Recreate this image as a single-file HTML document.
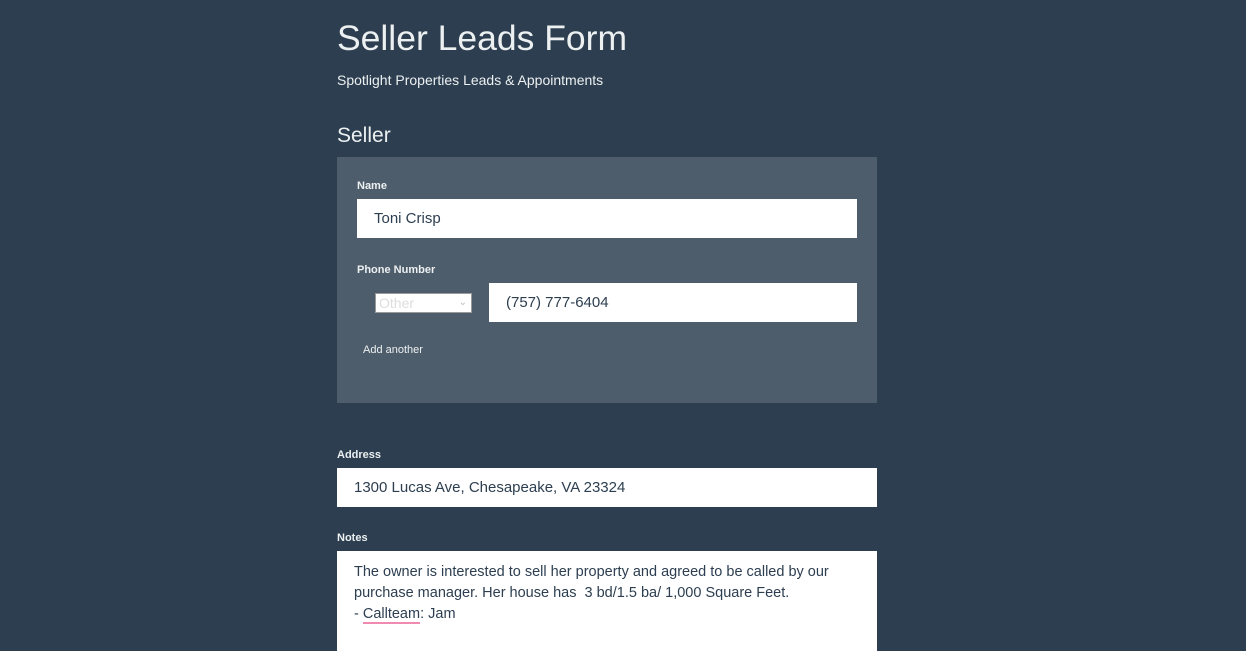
<!DOCTYPE html>
<html><head><style>
body{margin:0;background:#2c3e50;font-family:"Liberation Sans",sans-serif;width:1246px;height:641px;overflow:hidden;position:relative;color:#fff}
.a{position:absolute}
h1{position:absolute;left:337px;top:18px;margin:0;font-weight:normal;font-size:35.5px;color:#ecf0f1}
.lbl{position:absolute;font-size:11px;font-weight:bold;color:#ecf0f1}
.inp{position:absolute;background:#fff;color:#2c3e50;font-size:15px;box-sizing:border-box;padding-left:17px}
</style></head><body>
<h1>Seller Leads Form</h1>
<div class="a" style="left:337px;top:72px;font-size:14px;color:#ecf0f1">Spotlight Properties Leads &amp; Appointments</div>
<div class="a" style="left:337px;top:124px;font-size:21px;color:#ecf0f1">Seller</div>
<div class="a" style="left:337px;top:157px;width:540px;height:246px;background:#4e5d6c"></div>
<div class="lbl" style="left:357px;top:180px">Name</div>
<div class="inp" style="left:357px;top:199px;width:500px;height:39px;line-height:40px">Toni Crisp</div>
<div class="lbl" style="left:357px;top:264px">Phone Number</div>
<div class="a" style="left:375px;top:293px;width:97px;height:20px;background:#fff;border:1px solid #999;box-sizing:border-box;color:#ddd;font-size:14px;line-height:18px;padding-left:3px">Other<span style="position:absolute;right:4px;color:#bbb;font-size:10px">&#8964;</span></div>
<div class="inp" style="left:489px;top:283px;width:368px;height:39px;line-height:40px">(757) 777-6404</div>
<div class="a" style="left:363px;top:344px;font-size:11px;color:#ecf0f1">Add another</div>
<div class="lbl" style="left:337px;top:449px">Address</div>
<div class="inp" style="left:337px;top:468px;width:540px;height:39px;line-height:40px">1300 Lucas Ave, Chesapeake, VA 23324</div>
<div class="lbl" style="left:337px;top:532px">Notes</div>
<div class="inp" style="left:337px;top:551px;width:540px;height:100px;padding-top:11px;font-size:14.5px;line-height:21px">The owner is interested to sell her property and agreed to be called by our<br>purchase manager. Her house has &nbsp;3 bd/1.5 ba/ 1,000 Square Feet.<br>- <span style="border-bottom:2px solid #f08ab0">Callteam</span>: Jam</div>
</body></html>
